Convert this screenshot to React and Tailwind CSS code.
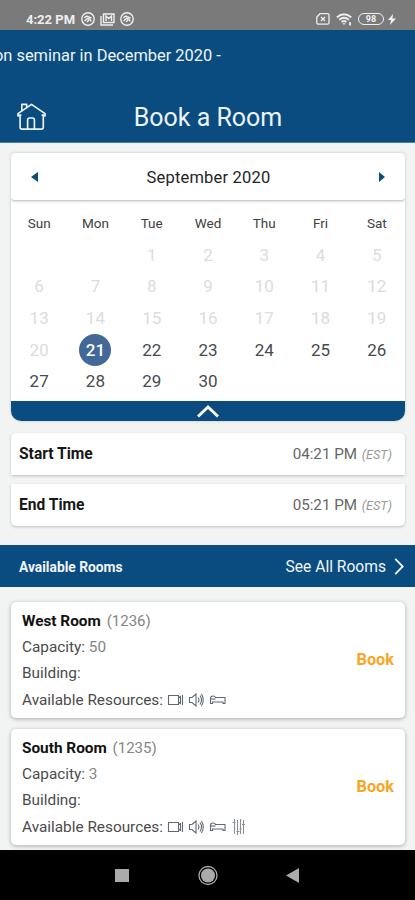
import { useState } from "react";

const WEEKDAYS = ["Sun", "Mon", "Tue", "Wed", "Thu", "Fri", "Sat"];
const DAYS = Array.from({ length: 30 }, (_, i) => i + 1);
const TODAY = 21;

const ROOMS = [
  { name: "West Room", number: "1236", capacity: 50, resources: ["video", "sound", "bed"] },
  { name: "South Room", number: "1235", capacity: 3, resources: ["video", "sound", "bed", "sliders"] },
];

const ResourceIcon = ({ type }) => {
  const props = { width: 17, height: 16, viewBox: "0 0 17 16", fill: "none", stroke: "#606878", strokeWidth: 1.1 };
  if (type === "video") {
    return (
      <svg {...props}>
        <path d="M1.500 3.500h10v9h-10zM11.500 6l2-1.500v7l-2-1.500" />
        <path d="M15.500 3v10" />
      </svg>
    );
  }
  if (type === "sound") {
    return (
      <svg {...props}>
        <path d="M1.500 5.500h2.500l4-3.500v12l-4-3.500H1.500z" />
        <path d="M10 5.500q2 2.500 0 5M12 3.500q3 4.500 0 9M13.500 2q3.500 6 0 12" />
      </svg>
    );
  }
  if (type === "bed") {
    return (
      <svg {...props}>
        <path d="M1.500 11.500V6.500Q1.500 4 4 4q2 0 2.500 1.500H16v6h-2V10H3.500v1.500z" />
        <path d="M2 7h4.500" />
      </svg>
    );
  }
  return (
    <svg {...props} className="ml-[2px]" width={13} viewBox="0 0 13 16" stroke="#8b9097">
      <path d="M2.500 0v15M5.500 1v15M8.500 0v15M11.500 1v14M.5 3.500h3M4.500 12.500h3M7.500 10h2M10 5.500h3" />
    </svg>
  );
};

const StatusBar = () => (
  <div className="h-[30px] shrink-0 bg-[#7a7a7a] flex items-center justify-between pl-[26px] pr-[19px] pt-[8px] text-[#efefef]">
    <div className="flex items-center">
      <span className="w-[55px] text-[13px] leading-none font-bold whitespace-nowrap">4:22 PM</span>
      <svg width="14" height="14" viewBox="0 0 14 14" fill="none" stroke="currentColor" strokeWidth="1.400">
        <circle cx="7" cy="7" r="6.200" />
        <path d="M3.500 6q2-3 4-1l3 1M3.500 9l3-2.500q3 0 3.500 3M6 10l2-2" />
      </svg>
      <svg className="ml-[5px]" width="15" height="13" viewBox="0 0 15 13" fill="none" stroke="currentColor" strokeWidth="1.400">
        <path d="M1 3v9h12" />
        <path d="M3.500 1h10.500v8.500H3.500z" />
        <path d="M6 8V3l2.700 2.500L11.500 3v5" />
      </svg>
      <svg className="ml-[5px]" width="14" height="14" viewBox="0 0 14 14" fill="none" stroke="currentColor" strokeWidth="1.400">
        <circle cx="7" cy="7" r="6.200" />
        <path d="M3.500 6q2-3 4-1l3 1M3.500 9l3-2.500q3 0 3.500 3M6 10l2-2" />
      </svg>
    </div>
    <div className="flex items-center">
      <svg width="14" height="12" viewBox="0 0 14 12" fill="none" stroke="currentColor" strokeWidth="1.300">
        <path d="M4 .7h7.500q1.500 0 1.500 1.500v7.500q0 1.500-1.500 1.500h-9Q.8 11.200.8 9.700V4z" />
        <path d="M5 4l4 4M9 4L5 8" />
      </svg>
      <svg className="ml-[6px]" width="17" height="13" viewBox="0 0 17 13" fill="none" stroke="currentColor" strokeWidth="1.800">
        <path d="M.8 4.300q7-6.200 14.500 0M3.200 6.800q4.800-4 9.700 0M5.500 9q2.500-2 5 0" />
        <path d="M6.500 10.300L8 12l1.500-1.700z" fill="currentColor" stroke="none" />
        <path d="M14 9v3.500" />
      </svg>
      <div className="ml-[5px] w-[26px] h-[12px] rounded-full border-[1.500px] border-current flex items-center justify-center text-[9px] leading-none font-bold">
        98
      </div>
      <svg className="ml-[4px]" width="8" height="11" viewBox="0 0 8 11" fill="currentColor">
        <path d="M5 0L0 6h3L2 11l6-6.500H4.500z" />
      </svg>
    </div>
  </div>
);

const Header = () => (
  <header className="h-[113px] shrink-0 bg-[#0a4c7f] text-[#edf4fb] border-b border-[#4a7ca4]">
    <div className="h-[52px] flex items-center overflow-hidden whitespace-nowrap text-[16.400px] pt-[1px]">
      <span className="-ml-[6px]">on seminar in December 2020 -</span>
    </div>
    <div className="h-[60px] grid grid-cols-[64px_1fr_64px] items-center pt-[10px]">
      <svg className="ml-[17px] -mt-[2px]" width="29" height="29" viewBox="0 0 30 30" fill="none" stroke="currentColor" strokeWidth="1.700" strokeLinejoin="round" strokeLinecap="round">
        <path d="M4 13.500L1 14.500V12L15 2.500 29 12v2.500l-3-1" />
        <path d="M3.200 13.500V26q0 2 2 2h20q2 0 2-2V13.500" />
        <path d="M5 9V2.500h5V6" />
        <path d="M11 28V18.500q0-2 2-2h3q2 0 2 2V28" />
      </svg>
      <h1 className="text-center text-[25px] leading-none pl-[1px] whitespace-nowrap">Book a Room</h1>
    </div>
  </header>
);

const Calendar = ({ selected, onSelect }) => (
  <section className="ml-[11px] mr-[10px] mt-[10px] h-[268px] shrink-0 flex flex-col bg-white rounded-t-[4px] rounded-b-[10px] overflow-hidden shadow-[0_0_3px_rgba(0,0,0,.2)]">
    <div className="h-[47px] shrink-0 flex items-center justify-between px-[20px] rounded-[4px] shadow-[0_1px_3px_rgba(0,0,0,.3)]">
      <svg width="7" height="10" viewBox="0 0 7 10" fill="#0a4c7f"><path d="M7 0v10L0 5z" /></svg>
      <span className="text-[16.500px] text-[#242424] tracking-[.2px] pt-[3px]">September 2020</span>
      <svg width="6" height="10" viewBox="0 0 6 10" fill="#0a4c7f"><path d="M0 0v10l6-5z" /></svg>
    </div>
    <div className="grid grid-cols-7 h-[46px] shrink-0 items-center text-center text-[13.500px] text-[#3e3e3e]">
      {WEEKDAYS.map((d) => <span key={d}>{d}</span>)}
    </div>
    <div className="grid grid-cols-7 auto-rows-[31.700px] grow -mt-[6.500px]">
      {DAYS.map((day) => (
        <button
          key={day}
          onClick={() => onSelect(day)}
          disabled={day < TODAY}
          className={`flex items-center justify-center text-[17px] ${day === 1 ? "col-start-3" : ""} ${
            day < TODAY ? "text-[#dadddf]" : "text-[#454b50]"
          }`}
        >
          {day === selected ? (
            <span className="size-8 rounded-full bg-[#426897] text-white font-medium flex items-center justify-center">{day}</span>
          ) : day}
        </button>
      ))}
    </div>
    <div className="h-[20px] shrink-0 bg-[#0a4c7f] flex items-center justify-center">
      <svg width="22" height="14" viewBox="0 0 22 14" fill="none" stroke="white" strokeWidth="3"><path d="M1 12.500L11 3l10 9.500" /></svg>
    </div>
  </section>
);

const TimeRow = ({ label, time, className }) => (
  <div className={`ml-[11px] mr-[10px] h-[42px] shrink-0 bg-white flex items-center justify-between pl-[8px] pr-[13px] shadow-[0_1px_3px_rgba(0,0,0,.22)] ${className}`}>
    <span className="text-[15.600px] font-bold text-[#171717] pt-[2px]">{label}</span>
    <span className="text-[15.200px] text-[#666] pt-[1px]">
      {time} <em className="ml-[1px] text-[12.700px] text-[#999]">(EST)</em>
    </span>
  </div>
);

const RoomCard = ({ room }) => (
  <article className="ml-[11px] mr-[10px] h-[116px] bg-white rounded-[5px] flex items-center justify-between pl-[11px] pr-[11px] shadow-[0_1px_4px_rgba(0,0,0,.3)]">
    <div className="text-[15.350px] leading-[26px] text-[#4b4b4b] whitespace-nowrap">
      <p><b className="text-[#111]">{room.name}</b> <span className="ml-[2px] text-[15px] text-[#858585]">({room.number})</span></p>
      <p>Capacity: <span className="text-[#858585]">{room.capacity}</span></p>
      <p>Building:</p>
      <div className="flex items-center pt-[1px]">
        Available Resources:
        <div className="ml-[4px] flex items-center gap-[4px]">
          {room.resources.map((r) => <ResourceIcon key={r} type={r} />)}
        </div>
      </div>
    </div>
    <button className="text-[16.300px] font-bold text-[#f9a51f] pt-[1px]">Book</button>
  </article>
);

const App = () => {
  const [selected, setSelected] = useState(TODAY);

  return (
    <div className="w-[415px] h-[900px] flex flex-col overflow-hidden bg-[#f2f3f3] font-['Roboto',sans-serif]">
      <StatusBar />
      <Header />
      <Calendar selected={selected} onSelect={setSelected} />
      <TimeRow label="Start Time" time="04:21 PM" className="mt-[12px] rounded-t-[5px]" />
      <TimeRow label="End Time" time="05:21 PM" className="mt-[9px] rounded-b-[5px]" />
      <div className="mt-[19px] h-[42px] shrink-0 bg-[#0a4c7f] flex items-center justify-between pl-[19px] pr-[11px] pt-[2px] text-[#f1f6fb]">
        <span className="text-[13.800px] font-bold">Available Rooms</span>
        <button className="flex items-center text-[15.600px]">
          <span className="pt-[2px]">See All Rooms</span>
          <svg className="ml-[8px]" width="10" height="17" viewBox="0 0 10 18" fill="none" stroke="currentColor" strokeWidth="2"><path d="M1 1l8 8-8 8" /></svg>
        </button>
      </div>
      <div className="mt-[15px] flex flex-col gap-[11px]">
        {ROOMS.map((room) => <RoomCard key={room.number} room={room} />)}
      </div>
      {/* Android navigation */}
      <nav className="mt-auto h-[50px] shrink-0 bg-black">
        <svg width="415" height="50" viewBox="0 0 415 50" fill="#aaa">
          <path d="M115 19h14v13h-14zM299 18v15l-13-7.500z" />
          <circle cx="208" cy="25.500" r="7" />
          <circle cx="208" cy="25.500" r="9" fill="none" stroke="#aaa" strokeWidth="1.300" />
        </svg>
      </nav>
    </div>
  );
};

export default App;
